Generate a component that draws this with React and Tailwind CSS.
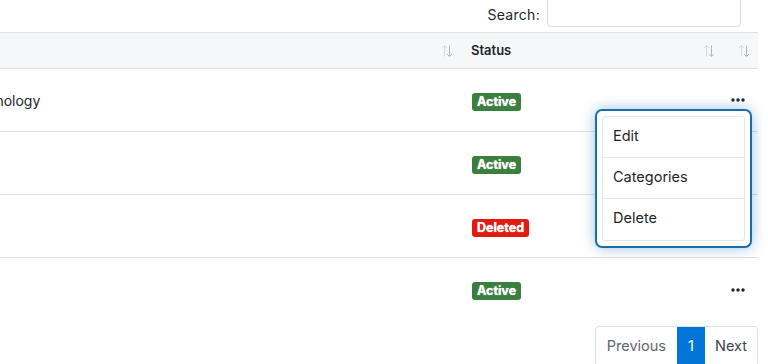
import React from 'react';

const SortIcon = () => (
  <svg width="12" height="14" viewBox="0 0 12 14" fill="none">
    <path d="M3.5 12.5V1.5M1 4l2.5-2.5L6 4" stroke="#d5d8dc" strokeWidth="1" />
    <path d="M8.5 1.5v11M6 10l2.5 2.5L11 10" stroke="#b3b8bd" strokeWidth="1" />
  </svg>
);

const Dots = () => (
  <svg width="14" height="4" viewBox="0 0 14 4">
    <circle cx="2" cy="2" r="1.7" fill="#1f2328" />
    <circle cx="7" cy="2" r="1.7" fill="#1f2328" />
    <circle cx="12" cy="2" r="1.7" fill="#1f2328" />
  </svg>
);

const Badge = ({ status }) => (
  <span
    className={`inline-block rounded-[3px] px-[5px] py-[1px] text-[12.5px] font-bold leading-[16px] text-white ${
      status === 'Deleted' ? 'bg-[#e21b10]' : 'bg-[#3b7f3e]'
    }`}
    style={{ textShadow: '0 0 1px rgba(255,255,255,0.9)' }}
  >
    {status}
  </span>
);

const rows = [
  { name: 'Technology', status: 'Active', menu: true },
  { name: '', status: 'Active' },
  { name: '', status: 'Deleted' },
  { name: '', status: 'Active', menu: true },
];

export default function App() {
  return (
    <div className="relative h-[364px] w-[768px] overflow-hidden bg-white text-[14px] text-[#212529]" style={{ fontFamily: 'Inter, "Noto Sans", sans-serif' }}>
      {/* search */}
      <div className="flex h-[32px] items-start justify-end pr-[27px]">
        <label className="mr-[7px] mt-[4px] text-[14px] tracking-[0.3px]">Search:</label>
        <div className="-mt-[6px] h-[33px] w-[194px] rounded-[4px] border border-[#d9dde1]" />
      </div>

      {/* table */}
      <div className="w-[758px]">
        <div className="flex h-[37px] items-center border-y border-[#dee2e6] bg-[#f6f7f9] text-[13px] font-semibold">
          <div className="flex w-[460px] justify-end pr-[7px]"><SortIcon /></div>
          <div className="flex w-[262px] items-center justify-between pl-[11px] pr-[7px]">
            <span>Status</span>
            <SortIcon />
          </div>
          <div className="flex w-[36px] justify-end pr-[8px]"><SortIcon /></div>
        </div>
        {rows.map((r, i) => (
          <div key={i} className={`flex h-[63px] items-center ${i < 3 ? 'border-b border-[#dbe2e8]' : ''}`}>
            <div className="w-[460px] overflow-hidden">
              <span className="-ml-[37px] inline-block">{r.name && 'Technology'}</span>
            </div>
            <div className="w-[262px] pl-[12px]"><Badge status={r.status} /></div>
            <div className="flex w-[36px] justify-end pr-[13px]">{r.menu && <Dots />}</div>
          </div>
        ))}
      </div>

      {/* pagination */}
      <div className="mt-[5px] flex w-[758px] justify-end">
        <div className="flex h-[40px] overflow-hidden rounded-[4px] border border-[#dee2e6] text-[14.5px]">
          <span className="flex items-center px-[11px] text-[#5e6771]">Previous</span>
          <span className="flex w-[28px] items-center justify-center bg-[#0275d8] text-white">1</span>
          <span className="flex items-center px-[10px] text-[#3c4650]">Next</span>
        </div>
      </div>

      {/* dropdown menu */}
      <div className="absolute left-[595px] top-[109px] h-[139px] w-[157px] rounded-[7px] border-2 border-[#1b6eac] bg-white p-[5px] shadow-[0_0_14px_rgba(40,120,190,0.45)]">
        <div className="h-full rounded-[3px] border border-[#e3e7eb]">
          {['Edit', 'Categories', 'Delete'].map((t, i) => (
            <div key={t} className={`flex h-[41px] items-center px-[10px] pb-[3px] text-[14.5px] ${i < 2 ? 'border-b border-[#e3e7eb]' : ''}`}>
              {t}
            </div>
          ))}
        </div>
      </div>
    </div>
  );
}
